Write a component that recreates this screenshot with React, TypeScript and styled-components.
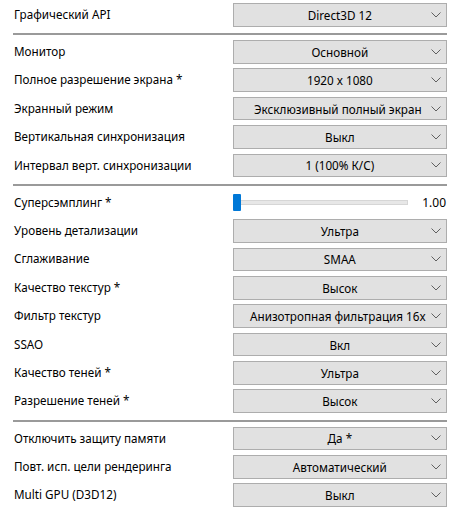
import styled, { createGlobalStyle } from 'styled-components';

const GlobalStyle = createGlobalStyle`
  html, body {
    margin: 0;
    padding: 0;
    background: #ffffff;
  }
  body {
    font-family: "Noto Sans", "Open Sans", sans-serif;
    color: #000000;
  }
`;

const Panel = styled.div`
  width: 450px;
  height: 510px;
  box-sizing: border-box;
  padding: 3px 3px 0 13px;
  background: #ffffff;
  overflow: hidden;
`;

const Section = styled.div`
  display: flex;
  flex-direction: column;
  gap: 4.8px;
`;

const Separator = styled.div`
  height: 2px;
  background: #9a9a9a;
  margin: 6.5px 0 5px;
`;

const Row = styled.div`
  display: grid;
  grid-template-columns: 219.7px 1fr;
  align-items: center;
  height: 23.6px;
`;

const Label = styled.span`
  font-size: 11.7px;
  line-height: 1;
  white-space: nowrap;
  padding-left: 1px;
`;

const Combo = styled.div`
  position: relative;
  height: 100%;
  box-sizing: border-box;
  background: #e1e1e1;
  border: 1px solid #adadad;
  display: flex;
  align-items: center;
  justify-content: center;
  font-size: 11.7px;
  white-space: nowrap;
`;

const ComboText = styled.span<{ $shift: number }>`
  transform: translateX(${({ $shift }) => $shift}px);
`;

const Chevron = styled.svg`
  position: absolute;
  right: 5px;
  top: 50%;
  width: 10px;
  height: 6px;
  margin-top: -3px;
`;

const SliderBox = styled.div`
  display: flex;
  align-items: center;
  height: 100%;
`;

const Track = styled.div`
  position: relative;
  width: 175px;
  height: 5px;
  box-sizing: border-box;
  background: #e7e7e7;
  border: 1px solid #d6d6d6;
`;

const Thumb = styled.div`
  position: absolute;
  left: -1px;
  top: 50%;
  width: 8px;
  height: 17px;
  margin-top: -8.5px;
  background: #0078d7;
  border-radius: 1px;
`;

const SliderValue = styled.span`
  margin-left: auto;
  font-size: 12px;
  padding-right: 1px;
`;

const ChevronIcon = () => (
  <Chevron viewBox="0 0 10 6">
    <path d="M0.5 0.5 L5 5 L9.5 0.5" fill="none" stroke="#606060" strokeWidth="1" />
  </Chevron>
);

type Item = { label: string; value?: string; slider?: string; shift?: number };

const sections: Item[][] = [
  [{ label: 'Графический API', value: 'Direct3D 12' }],
  [
    { label: 'Монитор', value: 'Основной' },
    { label: 'Полное разрешение экрана *', value: '1920 x 1080' },
    { label: 'Экранный режим', value: 'Эксклюзивный полный экран', shift: -2 },
    { label: 'Вертикальная синхронизация', value: 'Выкл' },
    { label: 'Интервал верт. синхронизации', value: '1 (100% К/С)' },
  ],
  [
    { label: 'Суперсэмплинг *', slider: '1.00' },
    { label: 'Уровень детализации', value: 'Ультра' },
    { label: 'Сглаживание', value: 'SMAA' },
    { label: 'Качество текстур *', value: 'Высок' },
    { label: 'Фильтр текстур', value: 'Анизотропная фильтрация 16x', shift: -2 },
    { label: 'SSAO', value: 'Вкл' },
    { label: 'Качество теней *', value: 'Ультра' },
    { label: 'Разрешение теней *', value: 'Высок' },
  ],
  [
    { label: 'Отключить защиту памяти', value: 'Да *' },
    { label: 'Повт. исп. цели рендеринга', value: 'Автоматический' },
    { label: 'Multi GPU (D3D12)', value: 'Выкл' },
  ],
];

export default function App() {
  return (
    <>
      <GlobalStyle />
      <Panel>
        {sections.map((items, si) => (
          <div key={si}>
            {si > 0 && <Separator />}
            <Section>
              {items.map((item) => (
                <Row key={item.label}>
                  <Label>{item.label}</Label>
                  {item.slider ? (
                    <SliderBox>
                      <Track>
                        <Thumb />
                      </Track>
                      <SliderValue>{item.slider}</SliderValue>
                    </SliderBox>
                  ) : (
                    <Combo>
                      <ComboText $shift={item.shift ?? 0}>{item.value}</ComboText>
                      <ChevronIcon />
                    </Combo>
                  )}
                </Row>
              ))}
            </Section>
          </div>
        ))}
      </Panel>
    </>
  );
}
